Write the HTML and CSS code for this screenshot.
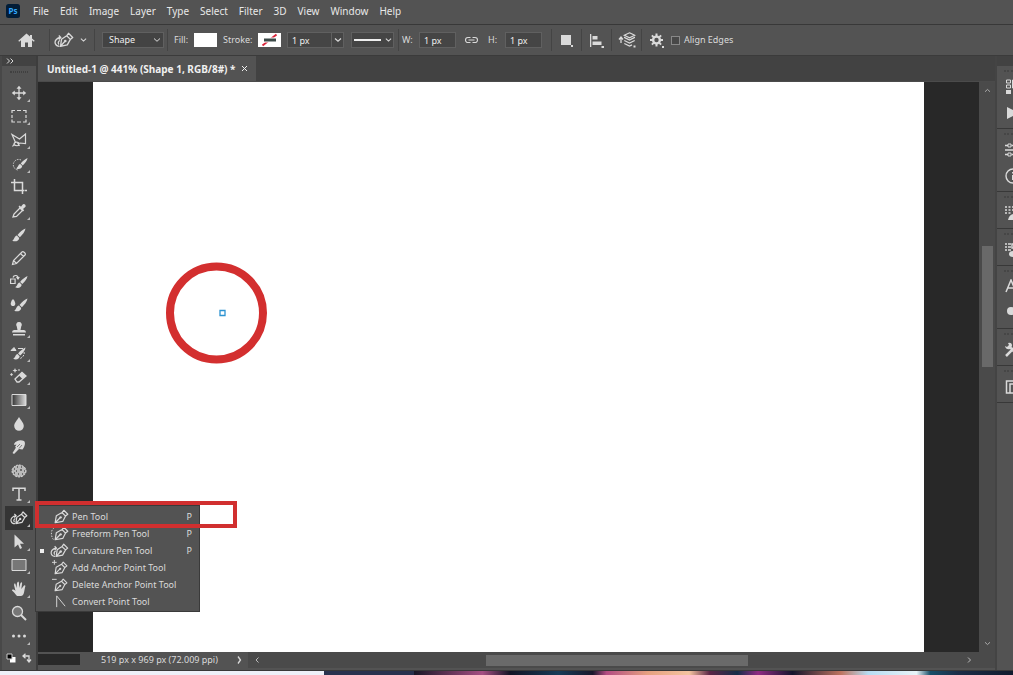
FILE: index.html
```html
<!DOCTYPE html>
<html lang="en">
<head>
<meta charset="utf-8">
<meta name="viewport" content="width=device-width, initial-scale=1">
<title>Untitled-1</title>
<link rel="stylesheet" href="styles.css">
</head>
<body>
<svg class="defs" aria-hidden="true">
  <symbol id="nib" viewBox="0 0 14 14"><path d="M1.2 12.8 2.3 6.2 7.6 3.3 10.9 6.6 8.3 11.6ZM1.2 12.8 5.8 8.2M7.7 3.2 9.3 1.2 13 4.9 10.9 6.5" fill="none" stroke="currentColor" stroke-width="1.1" stroke-linejoin="round"/><circle cx="6.3" cy="7.8" r="1.1" fill="currentColor"/></symbol>
  <symbol id="curve-nib" viewBox="0 0 20 16"><g fill="none" stroke="currentColor" stroke-width="1.3" stroke-linejoin="round"><path d="M6.5 14.3 7.5 7.3 12.7 3.8 16.4 7.4 13.3 12.9ZM6.5 14.3 11 9.3M12.8 3.6 14.5 1.3 18.7 5.5 16.3 7.5M5.5 14.3C1 14.3 0 10 2.3 7.5 3.5 6.2 5 5.5 6.5 5.5M4.8 3.5 6.8 5.5 4.8 7.5M5 12.5C3.7 11 4.3 9 6 8.5"/></g><circle cx="11.3" cy="9" r="1.3" fill="currentColor"/></symbol>
  <symbol id="brush" viewBox="0 0 14 14"><path d="M13.5.5C11 1.5 7.5 4.2 5.5 6.9L7.9 9.2C10.3 7 13.1 3.6 13.5.5ZM4.9 7.6C2.5 8 2.8 11 .3 12.7 3.5 14.3 7 12.7 7.2 9.9Z" fill="currentColor"/></symbol>
  <symbol id="down" viewBox="0 0 8 6"><path d="M1 1.5 4 4.3 7 1.5" fill="none" stroke="currentColor" stroke-width="1.2"/></symbol>
</svg>

<div class="app">
  <nav class="menubar" aria-label="Main menu">
    <svg class="logo" viewBox="0 0 14 14" role="img" aria-label="Ps"><rect width="14" height="14" rx="2.5" fill="#021d37"/><text x="7" y="9.8" text-anchor="middle">Ps</text></svg>
    <button>File</button><button>Edit</button><button>Image</button><button>Layer</button><button>Type</button><button>Select</button><button>Filter</button><button>3D</button><button>View</button><button>Window</button><button>Help</button>
  </nav>

  <div class="options">
    <div class="group home"><button aria-label="Home"><svg width="17" height="15" viewBox="0 0 17 15"><path d="M8.5.5 12 3.6V2h2v3.4l2.7 2.4-.8 1L14 7.2V14h-4V9.5H7V14H3V7.2L1.1 8.8.3 7.8Z" fill="currentColor"/></svg></button></div>
    <div class="group pen"><button aria-label="Curvature pen tool presets"><svg width="20" height="16"><use href="#curve-nib"/></svg><svg width="7" height="6"><use href="#down"/></svg></button></div>
    <div class="group mode"><select class="field" aria-label="Tool mode"><option>Shape</option></select></div>
    <div class="group paint">
      <span>Fill:</span><button class="swatch" aria-label="Fill colour"></button>
      <span>Stroke:</span><button class="swatch" aria-label="Stroke colour"><svg width="23" height="14" viewBox="0 0 23 14"><path d="M4.5 12.5 18.5 1.5" stroke="#d8263b" stroke-width="2"/><path d="M6 7h12" stroke="#fff" stroke-width="5"/><path d="M6 7h12" stroke="#3c4a48" stroke-width="3"/></svg></button>
      <div class="combo"><input class="field" value="1 px" aria-label="Stroke width"><button aria-label="Stroke width list"><svg width="8" height="6"><use href="#down"/></svg></button></div>
      <button class="line" aria-label="Stroke type"><i></i><svg width="7" height="6"><use href="#down"/></svg></button>
    </div>
    <div class="group size">
      <label for="w">W:</label><input class="field" id="w" value="1 px">
      <button aria-label="Link width and height"><svg width="15" height="8" viewBox="0 0 15 8"><path d="M6.5 1.5H4a2.5 2.5 0 0 0 0 5h2.5M8.5 1.5H11a2.5 2.5 0 0 1 0 5H8.5M4.5 4h6" fill="none" stroke="currentColor" stroke-width="1.1"/></svg></button>
      <label for="h">H:</label><input class="field" id="h" value="1 px">
    </div>
    <div class="group op"><button aria-label="Path operations"><svg width="14" height="14" viewBox="0 0 14 14" fill="currentColor"><path d="M1 2h10v10H1zM11 12h2v2h-2z"/></svg></button></div>
    <div class="group op"><button aria-label="Path alignment"><svg width="15" height="15" viewBox="0 0 15 15" fill="currentColor"><path d="M1 1h1.3v13H1zM3.5 3h5v3.5h-5zM3.5 8.5h9V12h-9zM12.5 13H15v2h-2.5z"/></svg></button></div>
    <div class="group op"><button aria-label="Path arrangement"><svg width="18" height="16" viewBox="0 0 18 16"><path d="M3 11V6M1 7.5 3 5l2 2.5" fill="none" stroke="currentColor" stroke-width="1.3"/><path d="m11.5.8 5.2 2.5-5.2 2.6-5.2-2.6Z" fill="none" stroke="currentColor" stroke-width="1.2"/><path d="m6 4.5 5.5 2.7L17 4.5V6l-5.5 2.8L6 6Z" fill="currentColor"/><path d="m6.3 8.5 5.2 2.6 5.2-2.6M6.3 11.5l5.2 2.6 2.5-1.2" fill="none" stroke="currentColor" stroke-width="1.2"/><path d="M15.5 13.5h2v2h-2z" fill="currentColor"/></svg></button></div>
    <div class="group last"><button aria-label="Path options"><svg width="14" height="15" viewBox="0 0 14 15"><circle cx="6.5" cy="7" r="3.4" fill="none" stroke="currentColor" stroke-width="2.4"/><path d="M6.5.5v2.5M6.5 11v2.5M0 7h2.5M10.5 7H13M1.9 2.4 3.6 4.1M9.4 9.9l1.7 1.7M1.9 11.6 3.6 9.9M9.4 4.1l1.7-1.7" stroke="currentColor" stroke-width="2"/><path d="M12 13h2v2h-2z" fill="currentColor"/></svg></button><label class="check"><input type="checkbox">Align Edges</label></div>
  </div>

  <div class="workspace">
    <aside class="toolbar" aria-label="Tools">
      <button class="expand" aria-label="Expand toolbar"><svg width="8" height="6" viewBox="0 0 8 6"><path d="m1 .5 2.500 2.500L1 5.500M4.500.5 7 3 4.500 5.500" fill="none" stroke="currentColor"/></svg></button>
      <div class="grip"></div>
      <div class="tools">
        <button class="more" aria-label="Move"><svg viewBox="0 0 18 16"><path d="M9 2v12M3 8h12" stroke="currentColor" stroke-width="1.3"/><path d="m9 .8 2.500 3h-5ZM9 15.200l-2.500-3h5ZM1.800 8l3-2.500v5ZM16.200 8l-3 2.500v-5Z" fill="currentColor"/></svg></button>
        <button class="more" aria-label="Marquee"><svg viewBox="0 0 18 16"><path d="M2 5V2.500h3M7 2.500h4M13 2.500h3V5M16 7v3M16 11.500V14h-3M11 14H7M5 14H2v-2.500M2 10V7" fill="none" stroke="currentColor" stroke-width="1.2"/></svg></button>
        <button class="more" aria-label="Polygonal lasso"><svg viewBox="0 0 18 16"><path d="M5.500 10.500 2 2.500 9.500 7 15.500 2v9.500L9.500 11M4 12.500c0-3 5-3 5-.5s-3.500 2-5 .5l-1.500 2M7 10l2.500 4" fill="none" stroke="currentColor" stroke-width="1.2"/></svg></button>
        <button class="more" aria-label="Quick selection"><svg viewBox="0 0 18 16"><path d="M11 4A5.300 5.300 0 1 0 8 14" fill="none" stroke="currentColor" stroke-dasharray="1.5 1.2"/><use href="#brush" x="6" y="1" width="12" height="13"/></svg></button>
        <button aria-label="Crop"><svg viewBox="0 0 18 16"><path d="M4.500 0v11.500H14M1 3.500h11.500V15M14.500 11.500H17" fill="none" stroke="currentColor" stroke-width="1.5"/></svg></button>
        <button class="more" aria-label="Eyedropper"><svg viewBox="0 0 18 16"><path d="m3 14 1-3 6-6 2.500 2.500-6 6Z" fill="none" stroke="currentColor" stroke-width="1.3"/><path d="m8.500 3.800 1.200-1.200 1.300 1.200 1.500-2c1.500-2 4.500.8 2.500 2.500l-2 1.700 1.200 1.200L13 8.400Z" fill="currentColor"/></svg></button>
        <button aria-label="Brush"><svg viewBox="0 0 18 16"><use href="#brush" x="2" y="1" width="14" height="14"/></svg></button>
        <button aria-label="Pencil"><svg viewBox="0 0 18 16"><path d="m2.500 14.500 1-4L12 2c1-1 4.500 1.500 3 3L6.500 13.500ZM3.500 10.500l3 3M10.500 3.500l3 3" fill="none" stroke="currentColor" stroke-width="1.2"/></svg></button>
        <button aria-label="Color replacement"><svg viewBox="0 0 18 16"><path d="M.6 5h4.500v4.500H.6zM3 3.500C4 .5 8 1 8 4M6.500 3 8 5l1.300-2" fill="none" stroke="currentColor" stroke-width="1.2"/><use href="#brush" x="5" y="1" width="13" height="14"/></svg></button>
        <button aria-label="Mixer brush"><svg viewBox="0 0 18 16"><path d="M3 2c3.500 4 2.500 7 0 7S-.5 6 3 2Z" fill="currentColor"/><use href="#brush" x="4" y="1" width="14" height="14"/></svg></button>
        <button class="more" aria-label="Clone stamp"><svg viewBox="0 0 18 16"><path d="M9 1a2.700 2.700 0 0 1 2.300 4.300L10.500 9H14q2 0 2 2.500H2Q2 9 4 9h3.500l-.8-3.700A2.700 2.700 0 0 1 9 1ZM3 13h12v1.500H3z" fill="currentColor"/></svg></button>
        <button class="more" aria-label="History brush"><svg viewBox="0 0 18 16"><path d="m1 5.500 3-3 2 3ZM8 3.500h5" fill="currentColor" stroke="currentColor"/><path d="M14 7c1 3-2 6-4 6.500" fill="none" stroke="currentColor" stroke-dasharray="2 1"/><use href="#brush" x="3" y="2" width="13" height="13"/></svg></button>
        <button class="more" aria-label="Magic eraser"><svg viewBox="0 0 18 16"><path d="m5 11 7-6.500 4 3.500-7 6H7Z" fill="none" stroke="currentColor" stroke-width="1.3"/><path d="m9 7.500 3-3 4 3.500-3.500 3ZM5 0l.7 1.800L7.500 2.500l-1.800.7L5 5l-.7-1.800L2.500 2.500l1.800-.7ZM1.500 5 3 6.500 1.500 8 0 6.500ZM9 1l1 1-1 1-1-1Z" fill="currentColor"/></svg></button>
        <button class="more" aria-label="Gradient"><svg viewBox="0 0 18 16"><defs><linearGradient id="grad"><stop stop-color="#333"/><stop offset="1" stop-color="#ddd"/></linearGradient></defs><path d="M2 2.500h14v11H2z" fill="url(#grad)" stroke="currentColor"/></svg></button>
        <button aria-label="Blur"><svg viewBox="0 0 18 16"><path d="M9 1c2 3.500 4.800 6 4.800 9a4.800 4.800 0 0 1-9.600 0C4.200 7 7 4.500 9 1Z" fill="currentColor"/></svg></button>
        <button aria-label="Smudge"><svg viewBox="0 0 18 16"><path d="M4 5c2-4 7-4.500 10-3 2 2 .5 6-1.500 8.500L9 10l-5 5-1.500-1L6 8.500 5 8l1.500-2.500L4.500 6Z" fill="currentColor"/><path d="m7 8 3-3M9 9.500 12 6" stroke="#535353" stroke-width=".7"/></svg></button>
        <button aria-label="Sponge"><svg viewBox="0 0 18 16"><ellipse cx="9" cy="8" rx="7" ry="6" fill="#b9b9b9" stroke="currentColor" stroke-dasharray="2 1"/><path d="M4 6h1M7 4h1M11 4h1M6 8h1M10 7h2M14 8h1M4 10h1M8 11h1M12 11h1" stroke="#535353" stroke-width="1.3"/></svg></button>
        <button class="more" aria-label="Type"><svg viewBox="0 0 18 16"><path d="M3 5V2.200h12V5M9 2.500v11.300M6.500 14h5" fill="none" stroke="currentColor" stroke-width="1.5"/></svg></button>
        <button class="more active" aria-label="Curvature pen"><svg viewBox="0 0 20 16"><use href="#curve-nib"/></svg></button>
        <button class="more" aria-label="Path selection"><svg viewBox="0 0 18 16"><path d="M4.500.5v13L8 10.500l2 4.500 2-1-2-4.300h4Z" fill="currentColor"/></svg></button>
        <button class="more" aria-label="Rectangle"><svg viewBox="0 0 18 16"><path d="M2 2.500h14v11H2z" fill="#777" stroke="currentColor"/></svg></button>
        <button class="more" aria-label="Hand"><svg viewBox="0 0 18 16"><path d="M7 15C5 13 4 11 2 9.500 2 8 4 8 5.500 10L4 4Q5-.5 6.500 7L7 2q1.500-3 2 0v5l1.500-5q2-2 1.500 1l-.7 5L14 4.500q2-1 1 2C14 11 14 15 11 15Z" fill="currentColor"/></svg></button>
        <button aria-label="Zoom"><svg viewBox="0 0 18 16"><circle cx="7.5" cy="6.5" r="5" fill="#777" stroke="currentColor" stroke-width="1.3"/><path d="m11 10 5 5" stroke="currentColor" stroke-width="2"/></svg></button>
        <button class="more" aria-label="Edit toolbar"><svg viewBox="0 0 18 16" fill="currentColor"><circle cx="3.5" cy="8" r="1.5"/><circle cx="9" cy="8" r="1.5"/><circle cx="14.5" cy="8" r="1.5"/></svg></button>
      </div>
      <div class="colors">
        <button aria-label="Default colours"><svg width="10" height="10" viewBox="0 0 10 10"><path d="M4 4h5.500v5.500H4z" fill="#fff"/><path d="M1 1h5v5H1z" fill="#000" stroke="#ccc"/></svg></button>
        <button aria-label="Swap colours"><svg width="10" height="10" viewBox="0 0 10 10"><path d="M2 3h5v5M3.500.8 1 3l2.500 2.200M5 6.500 7 9l2-2.500" fill="none" stroke="currentColor" stroke-width="1.3"/></svg></button>
      </div>
    </aside>

    <main class="document">
      <div class="tabs"><div class="tab"><b>Untitled-1 @ 441% (Shape 1, RGB/8#) *</b><button aria-label="Close tab"><svg width="7" height="7" viewBox="0 0 7 7"><path d="m1 1 5 5M6 1 1 6" stroke="currentColor"/></svg></button></div></div>
      <div class="stage">
        <div class="pasteboard"><div class="canvas">
          <svg class="drawing" width="102" height="102" viewBox="0 0 102 102"><circle cx="50.500" cy="51" r="46.500" fill="none" stroke="#d32f2f" stroke-width="8"/><path d="M54 48.500h5v5h-5z" fill="#fff" stroke="#2d93d1" stroke-width="1.3"/></svg>
        </div></div>
        <div class="vscroll"><svg width="7" height="5"><use href="#down"/></svg><div class="vtrack"><i></i></div><svg width="7" height="5"><use href="#down"/></svg></div>
      </div>
      <div class="status"><div class="zoom"></div><span class="info">519 px x 969 px (72.009 ppi)</span><button aria-label="Status options"><svg width="5" height="8" viewBox="0 0 5 8"><path d="m1 .5 2.500 3.500L1 7.500" fill="none" stroke="currentColor" stroke-width="1.3"/></svg></button>
        <div class="hscroll"><svg width="5" height="6" viewBox="0 0 5 6"><path d="M3.500.5 1 3l2.500 2.500" fill="none" stroke="currentColor"/></svg><div class="track"><i></i></div><svg width="5" height="6" viewBox="0 0 5 6"><path d="M1 .5 3.500 3 1 5.500" fill="none" stroke="currentColor"/></svg></div>
      </div>
    </main>

    <aside class="panels" aria-label="Panels">
      <div class="panels-head"></div>
      <section><button aria-label="History"><svg viewBox="0 0 16 16"><path d="M1.500 1h4v3h-4zM1.500 6h4v3h-4zM7.500 1h6v8h-6z" fill="none" stroke="currentColor"/><path d="M1 11h5v4H1z" fill="currentColor"/></svg></button><button aria-label="Actions"><svg viewBox="0 0 16 16"><path d="m2 2 12 6-12 6Z" fill="currentColor"/></svg></button></section>
      <section><button aria-label="Adjustments"><svg viewBox="0 0 16 16"><path d="M0 3.500h3M6.500 3.500H16M0 8h8M0 12.500h3M6.500 12.500H16" stroke="currentColor" stroke-width="1.3"/><path d="M3 2h3v3H3zM3 11h3v3H3z" fill="none" stroke="currentColor"/></svg></button><button aria-label="Info"><svg viewBox="0 0 16 16"><circle cx="8" cy="8" r="7" fill="none" stroke="currentColor" stroke-width="1.4"/><path d="M8 4v1.500M8 7v5" stroke="currentColor" stroke-width="2"/></svg></button></section>
      <section><button aria-label="Brush settings"><svg viewBox="0 0 16 16"><path d="M0 2h2M3.500 2h2M7 2h2M0 5h2M3.500 5h2M7 5h2M0 8h2M3.500 8h2" stroke="currentColor" stroke-width="1.5"/><path d="M3 15q1-5 5-6l3 6Z" fill="currentColor"/></svg></button></section>
      <section><button aria-label="Brushes"><svg viewBox="0 0 16 16"><path d="M0 2h2M3 2h3M0 5h2M3 5h3M0 8h2M3 8h3M7 2h5v4H7z" stroke="currentColor" stroke-width="1.4" fill="none"/><ellipse cx="8" cy="12" rx="4" ry="3" fill="currentColor"/></svg></button></section>
      <section><button aria-label="Character"><svg viewBox="0 0 16 16"><path d="M1 13 6 1l5 12M3 9h6" fill="none" stroke="currentColor" stroke-width="1.5"/></svg></button><button aria-label="Paragraph"><svg viewBox="0 0 16 16"><circle cx="6" cy="6" r="4" fill="currentColor"/><path d="M9 2v12M12 2v12" stroke="currentColor"/></svg></button></section>
      <section><button aria-label="Tool presets"><svg viewBox="0 0 16 16"><path d="m4 4 9 10M1 14l8-8" stroke="currentColor" stroke-width="2.5"/><path d="M0 4 2 5 4 3 3 1q4-1 4 3L5 7Q1 8 0 4Z" fill="currentColor"/></svg></button></section>
      <section><button aria-label="Libraries"><svg viewBox="0 0 16 16"><path d="M1.500 2h13v12h-13zM5 5h9v9H5z" fill="none" stroke="currentColor" stroke-width="1.5"/></svg></button></section>
    </aside>

    <div class="flyout" role="menu">
      <button role="menuitem"><svg viewBox="0 0 20 16"><use href="#nib" x="4" y="0" width="16" height="16"/></svg><span>Pen Tool</span><kbd>P</kbd></button>
      <button role="menuitem"><svg viewBox="0 0 20 16"><path d="M4 2C0 5 1 12 4 15" fill="none" stroke="currentColor" stroke-dasharray="1.5 1.5"/><use href="#nib" x="4" y="0" width="16" height="16"/></svg><span>Freeform Pen Tool</span><kbd>P</kbd></button>
      <button class="current" role="menuitem"><svg viewBox="0 0 20 16"><use href="#curve-nib"/></svg><span>Curvature Pen Tool</span><kbd>P</kbd></button>
      <button role="menuitem"><svg viewBox="0 0 20 16"><path d="M2 2.500h5M4.500 0v5" stroke="currentColor"/><use href="#nib" x="4" y="1" width="15" height="15"/></svg><span>Add Anchor Point Tool</span></button>
      <button role="menuitem"><svg viewBox="0 0 20 16"><path d="M2 2.500h5" stroke="currentColor"/><use href="#nib" x="4" y="1" width="15" height="15"/></svg><span>Delete Anchor Point Tool</span></button>
      <button role="menuitem"><svg viewBox="0 0 20 16"><path d="M7 14V2l9 11" fill="none" stroke="currentColor"/></svg><span>Convert Point Tool</span></button>
    </div>
    <div class="highlight"></div>
  </div>
  <div class="desktop"><i></i><b></b></div>
</div>
</body>
</html>
```

FILE: styles.css
```css
* { box-sizing: border-box; }
body { margin: 0; background: #535353; color: #dadada; font: 9px/12px "Noto Sans", "Open Sans", sans-serif; }
button, input, select { font: inherit; color: inherit; }
button { display: flex; align-items: center; justify-content: center; padding: 0; border: 0; background: none; }
svg { display: block; flex: none; }
.defs { position: absolute; width: 0; height: 0; }
.app { display: flex; flex-direction: column; height: 100vh; overflow: hidden; }

.menubar { display: flex; align-items: center; gap: 11px; height: 24px; padding: 0 6px 2px; font-size: 10px; color: #e8e8e8; }
.logo { width: 14px; height: 14px; margin-right: 2px; }
.logo text { font: bold 8px "Noto Sans", sans-serif; fill: #31a8ff; }

.options { display: flex; align-items: center; height: 32px; border-top: 1px solid #383838; border-bottom: 1px solid #3b3b3b; }
.group { display: flex; align-items: center; height: 22px; border-left: 1px solid #444; }
.group.home { width: 49px; padding-left: 18px; border-left: 0; }
.pen { width: 45px; padding-left: 4px; }
.pen button { gap: 6px; }
.mode { width: 73px; padding-left: 7px; }
.field { height: 16px; min-width: 0; padding: 0 4px; border: 1px solid #606060; border-radius: 0; background-color: #454545; color: #eee; }
select.field { width: 62px; appearance: none; padding-left: 6px; background: #434343 url("data:image/svg+xml,%3Csvg xmlns='http://www.w3.org/2000/svg' width='8' height='6'%3E%3Cpath d='M1 1.5 4 4.3 7 1.5' fill='none' stroke='%23ddd'/%3E%3C/svg%3E") no-repeat right 2px center; }
.paint { width: 231px; display: grid; grid-template-columns: 20px 29px 35px 29px 64px 44px; padding-left: 6px; }
.swatch { width: 23px; height: 14px; background: #fff; }
.combo { display: flex; width: 57px; }
.combo .field { width: 45px; }
.combo button { width: 12px; border: 1px solid #606060; border-left: 0; background: #454545; }
.line { width: 43px; height: 16px; gap: 4px; border: 1px solid #606060; background: #454545; }
.line i { width: 27px; height: 2px; background: #eee; }
.size { width: 153px; display: grid; grid-template-columns: 17px 37px 32px 17px 37px; padding-left: 3px; }
.size button { padding-right: 1px; }
.op { width: 30px; justify-content: center; }
.last { padding-left: 8px; gap: 7px; }
.check { display: flex; align-items: center; gap: 4px; }
.check input { appearance: none; width: 9px; height: 9px; margin: 0; border: 1px solid #888; background: #484848; }

.workspace { position: relative; display: flex; flex: 1; min-height: 0; }
.toolbar { display: flex; flex-direction: column; width: 38px; border-right: 2px solid #3d3d3d; border-left: 2px solid #484848; }
.expand { height: 10px; justify-content: flex-start; padding-left: 4px; background: #424242; }
.grip { width: 18px; height: 2px; margin: 5px auto 0; border-top: 1px dotted #404040; border-bottom: 1px dotted #404040; }
.tools { display: flex; flex-direction: column; flex: 1; min-height: 0; padding-top: 8px; }
.tools button { position: relative; flex: 1; min-height: 0; margin: 0 3px; }
.tools svg { width: 18px; height: 16px; }
.tools .active { background: #343434; }
.more::after { content: ""; position: absolute; right: 3px; bottom: 3px; border-left: 3px solid transparent; border-bottom: 3px solid #bbb; }
.colors { display: flex; gap: 6px; height: 22px; align-items: center; padding: 0 0 2px 4px; }

.document { display: flex; flex-direction: column; flex: 1; min-width: 0; }
.tabs { display: flex; height: 26px; background: #424242; border-bottom: 1px solid #4b4b4b; }
.tab { display: flex; align-items: center; gap: 5px; padding: 0 8px 0 9px; background: #535353; color: #f0f0f0; font-size: 10px; white-space: nowrap; }
.stage { display: flex; flex: 1; min-height: 0; }
.pasteboard { flex: 1; display: flex; padding: 0 55px; background: #282828; }
.canvas { position: relative; flex: 1; background: #fff; }
.drawing { position: absolute; left: 73px; top: 180px; }
.vscroll { display: flex; flex-direction: column; align-items: center; width: 16px; padding: 6px 1px; background: #4a4a4a; color: #aaa; }
.vscroll svg:first-child { transform: rotate(180deg); }
.vtrack { display: grid; grid-template-rows: 28fr 22fr 50fr; flex: 1; width: 11px; }
.vtrack i { grid-row: 2; background: #696969; }
.status { display: flex; align-items: flex-start; height: 18px; }
.zoom { flex: none; width: 42px; height: 11px; margin-top: 2px; background: #292929; }
.info { flex: none; width: 151px; padding: 2px 0 0 21px; white-space: nowrap; }
.status > button { flex: none; width: 17px; height: 16px; }
.hscroll { display: flex; flex: 1; align-items: center; height: 16px; padding: 0 23px 0 7px; background: #4a4a4a; color: #bbb; }
.track { flex: 1; display: grid; grid-template-columns: 32fr 37fr 31fr; }
.track i { grid-column: 2; height: 11px; background: #6a6a6a; }

.panels { width: 18px; border-left: 2px solid #444; overflow: hidden; }
.panels-head { height: 10px; background: #424242; }
.panels section { position: relative; padding: 8px 0 2px 8px; border-bottom: 1px solid #383838; }
.panels section::before { content: ""; position: absolute; left: 7px; right: 0; top: 4px; border-top: 2px dotted #464646; }
.panels button { height: 26px; width: 16px; }
.panels svg { width: 16px; height: 16px; }

.flyout { position: absolute; left: 35px; bottom: 58px; width: 165px; padding: 2px 0 1px; background: #535353; border: 1px solid #3a3a3a; }
.flyout button { position: relative; display: flex; width: 100%; height: 17px; justify-content: flex-start; padding: 0 7px 0 14px; gap: 3px; white-space: nowrap; }
.flyout svg { width: 19px; height: 15px; }
.flyout kbd { margin-left: auto; font: inherit; }
.current::before { content: ""; position: absolute; left: 4px; width: 4px; height: 4px; background: #eee; }
.highlight { position: absolute; left: 35px; bottom: 142px; width: 202px; height: 27px; border: 4px solid #d12f2f; pointer-events: none; }

.desktop { display: flex; height: 5px; border-top: 1px solid #383838; }
.desktop i { width: 32%; background: #edf0f8; }
.desktop b { flex: 1; background: linear-gradient(90deg, #29324e 0 13%, #191726 13%, #a64f83 23%, #131425 27%, #173c58 34%, #19182c 39%, #b34c82 41%, #e6a080 47%, #f5c4a0 53%, #5a2546 56%, #152d48 60%, #902b83 63%, #15152d 68%, #bd735f 75%, #b7dcf2 79%, #e9f4f8 86%, #174e68 88%, #1c2d47 92%, #111b2d); }
```
